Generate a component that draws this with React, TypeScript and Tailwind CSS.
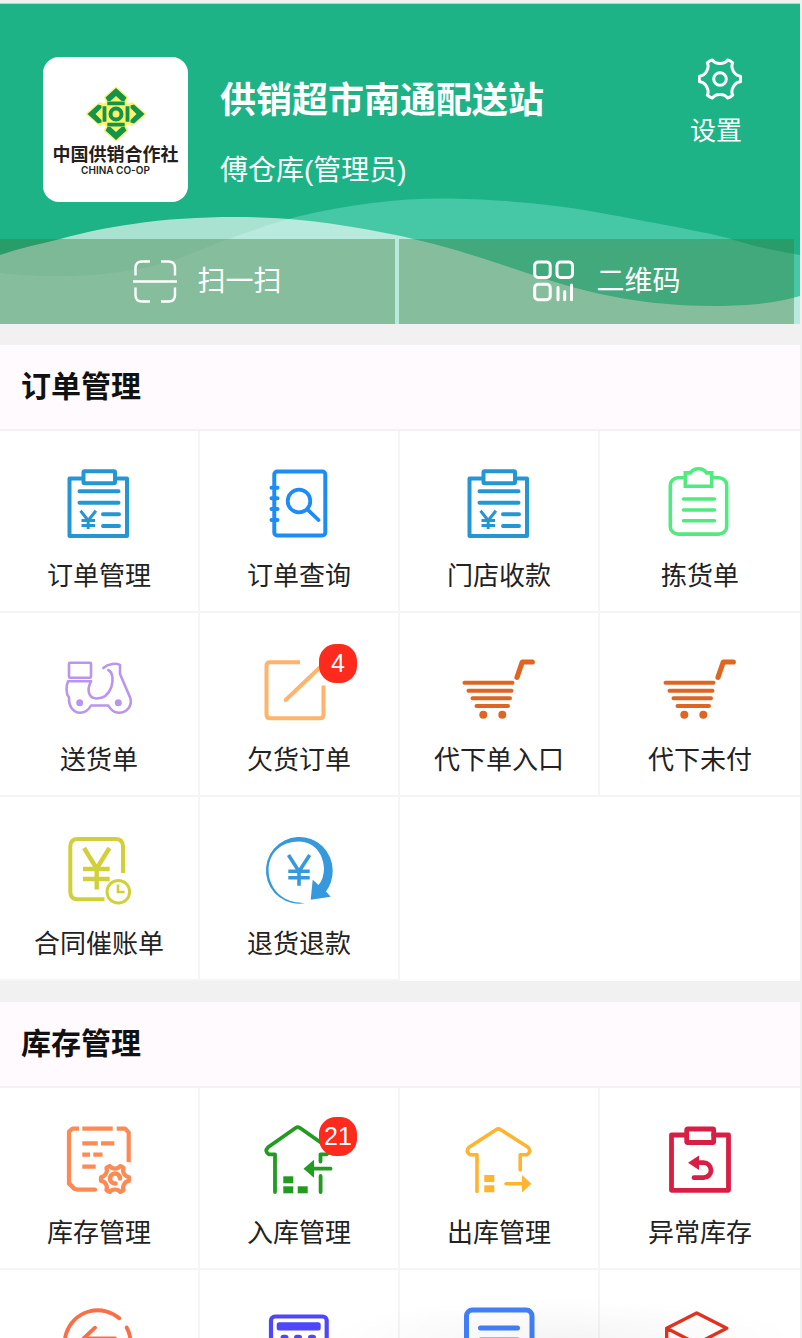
import type { ReactNode } from 'react';

interface IMenuItem {
  icon: ReactNode;
  label?: string;
  badge?: number;
}

interface IMenuSection {
  title: string;
  items: IMenuItem[];
}

// Six-lobed gear outline around (cx, cy)
const gearPath = (cx: number, cy: number, r: number) => {
  const point = (radius: number, deg: number) => {
    const a = (deg * Math.PI) / 180;
    return `${(cx + radius * Math.cos(a)).toFixed(2)} ${(cy + radius * Math.sin(a)).toFixed(2)}`;
  };
  let d = `M${point(r, -8)}`;
  for (let deg = 0; deg < 360; deg += 60) {
    d += `Q${point(r * 1.02, deg)} ${point(r, deg + 8)}`;
    d += `C${point(r * 0.72, deg + 13)} ${point(r * 0.72, deg + 47)} ${point(r, deg + 52)}`;
  }
  return d + 'Z';
};

function Icon({ color, width = 4, children }: { color: string; width?: number; children: ReactNode }) {
  return (
    <svg
      viewBox="0 0 80 80"
      className="block h-20 w-20"
      fill="none"
      stroke={color}
      strokeWidth={width}
      strokeLinecap="round"
      strokeLinejoin="round"
      aria-hidden="true"
    >
      {children}
    </svg>
  );
}

const OrderIcon = () => (
  <Icon color="#2497d3">
    <path d="M24 14.5H10.5V72h57.5V14.5H56" />
    <rect x="24.5" y="7.3" width="31.5" height="12" rx="1" />
    <path d="M20.500 27.300h39M20.500 38.700h39M44 50.300h16M44 62h16" />
    <path strokeWidth="3" strokeLinecap="butt" d="M21.500 46.700l7.700 9.800 7.700-9.800M29.200 56V65M22.500 56.500h13.500M22.500 61.500h13.500" />
  </Icon>
);

const SearchIcon = () => (
  <Icon color="#1e8cf5">
    <rect x="15.3" y="7.5" width="51" height="64" rx="3" />
    <path d="M12.5 23.7h6M12.5 34.3h6M12.5 45h6M12.5 56h6" />
    <circle cx="40" cy="37" r="11.3" strokeWidth="3.8" />
    <path strokeWidth="3.8" d="M48.3 45.3L59.5 56" />
  </Icon>
);

const PickIcon = () => (
  <Icon color="#52ea80" width={3.6}>
    <path d="M25.3 13.7H18a7.7 7.7 0 0 0-7.7 7.700v41a7.7 7.7 0 0 0 7.700 7.700h41a7.7 7.7 0 0 0 7.700-7.700v-41a7.7 7.7 0 0 0-7.700-7.700h-7.300" />
    <path strokeLinejoin="miter" d="M25.3 8.9h5.2c3.5-5.6 12.5-5.6 16 0h5.200v13.400H25.300z" />
    <path d="M23.5 35h31M23.5 46h31M23.5 56.7h31" />
  </Icon>
);

const ScooterIcon = () => (
  <Icon color="#b995ec" width={2.6}>
    <rect x="10" y="14.7" width="22" height="15" rx="1" />
    <path d="M32 33.3H9c-2 5-2.300 12 1 16.200-.5 9 4.500 15.200 11 15.200 5 0 8.500-2.500 11-7.200h17.300c2.500 4.700 5.500 7.200 10.700 7.200 8 0 13.500-7 11.300-14.700L61 26v-9c-3-2.500-12-1-16.700 3" />
    <path d="M49.300 22c5 2.500 5 11 3 17.200-3 8-9 11.300-14.600 11.300-8.200 0-10.200-8.500-5.700-17.200" />
    <circle cx="20.700" cy="54.700" r="2.200" fill="#b995ec" />
    <circle cx="59.300" cy="54.700" r="2.200" fill="#b995ec" />
  </Icon>
);

const OweIcon = () => (
  <Icon color="#ffb36b">
    <path strokeLinecap="butt" d="M41 14.300H11q-3.500 0-3.500 3.500v49q0 3.500 3.500 3.500h50q3.500 0 3.500-3.500V37.500" />
    <path d="M26.700 52L65 15.500" />
  </Icon>
);

const CartIcon = () => (
  <Icon color="#de6522">
    <path d="M5.500 34.700h48M9.500 42.700h43M13.500 50.300h37.500M17.500 58h31.500" />
    <path strokeWidth="5.200" d="M58 29.300l5.300-15.300h10" />
    <circle cx="24.300" cy="66.700" r="2" />
    <circle cx="43.300" cy="66.700" r="2" />
  </Icon>
);

const BillIcon = () => (
  <Icon color="#d2d03a">
    <path strokeLinecap="butt" d="M64 41V14.500q0-7.500-7.500-7.500h-37.700q-7.500 0-7.500 7.500v45.300q0 7.500 7.500 7.500H45.500" />
    <path strokeLinecap="butt" strokeLinejoin="miter" strokeWidth="4.400" d="M25 16l12.700 20.500L50.400 16M37.700 35v22.500M24 37h26.700M24 47h26.700" />
    <circle cx="59.300" cy="59.700" r="11.300" strokeWidth="3" />
    <path strokeLinecap="butt" strokeLinejoin="miter" strokeWidth="2.600" d="M59 52.500v7.500h6.500" />
  </Icon>
);

const RefundIcon = () => (
  <Icon color="#3799dd" width={3.600}>
    <path
      stroke="none"
      fill="#3799dd"
      d="M46 71.300A33.400 33.400 0 1 1 73.700 38.700Q73.700 50 67 59.500L71.700 64.700 51.700 67.700 53.700 47.700 59.500 53Q65 46.500 65 36C64 20 54 9.800 40 9.500 22 9.500 9.600 21 9.600 38.300 9.600 56 23 69.500 40 70.600Z"
    />
    <path strokeLinecap="butt" strokeLinejoin="miter" d="M29.500 23L40 39.500 50.700 23M40 39v14.700M29.300 39.300h21.400M29.300 45.700h21.400" />
  </Icon>
);

const StockIcon = () => (
  <Icon color="#fb8a54" width={4.200}>
    <path strokeLinecap="butt" d="M20 7.700h-6.500l-3.500 3v52l5 4.500" />
    <path d="M10 62l5 5.700 4 1H36" />
    <path strokeLinecap="butt" d="M23.300 7.700h30.400M57.700 7.700h8.500l3.500 4V41.300" />
    <path strokeLinecap="butt" d="M23.300 22.300h15.400M42 22.300h13.300M23.300 33.700H31M34.300 33.700h9.200M23.300 45.700h13.400" />
    <path d={gearPath(56, 58, 14)} />
    <path strokeWidth="4.500" d="M56.500 62.500a5 5 0 1 1 4.500-5" />
  </Icon>
);

const InboundIcon = () => (
  <Icon color="#219c21" width={3.800}>
    <path d="M16 71V33.300H10q-5-3 -1-7L36.500 7q2.300-1.500 4.600 0l27.400 19.300q4 4-1 7h-6V40.500M61.600 55v16" />
    <path d="M54 47.700h17.500" />
    <g fill="#219c21" stroke="none">
      <path d="M44.500 47.700L55 38.700v18z" />
      <rect x="24.300" y="55.300" width="10" height="7" />
      <rect x="24.300" y="65.300" width="10" height="7" />
      <rect x="38.700" y="65.300" width="10" height="7" />
    </g>
  </Icon>
);

const OutboundIcon = () => (
  <Icon color="#ffb42d" width={3.600}>
    <path d="M18 70.500V33.700H11q-5-3-1-7.500L37 8.700q2.300-1.500 4.600 0L69 26.200q4 4.500-1 7.500h-6.800V49" />
    <path d="M47 62.700h17" />
    <g fill="#ffb42d" stroke="none">
      <path d="M72.300 62.700L63 54v17.500z" />
      <rect x="25.300" y="54" width="10" height="7" />
      <rect x="25.300" y="64.300" width="10" height="7" />
    </g>
  </Icon>
);

const AbnormalIcon = () => (
  <Icon color="#d91e46" width={4.800}>
    <path d="M26.700 14H11.500v55.300h57V14H53.700" />
    <rect x="26.700" y="8" width="27" height="13.500" rx="1" />
    <path d="M34 56.700h9.500a7.500 7.500 0 0 0 0-15H38" />
    <path fill="#d91e46" stroke="none" d="M28 41.700l11-7.200v14.400z" />
  </Icon>
);

const TransferIcon = () => (
  <Icon color="#fb6d45" width={3.800}>
    <path d="M60.300 13.300A33 33 0 1 0 67.700 22.500" />
    <path d="M36 22.700L24.500 33.500H56" />
  </Icon>
);

const CalculatorIcon = () => (
  <Icon color="#4f46fb" width={4.200}>
    <rect x="12" y="11.500" width="55.700" height="62" rx="4" />
    <g fill="#4f46fb" stroke="none">
      <rect x="17.700" y="17.300" width="44" height="8.200" rx="2.500" />
      <rect x="21.500" y="29.700" width="8" height="8" rx="3" />
      <rect x="35" y="29.700" width="8" height="8" rx="3" />
      <rect x="49" y="29.700" width="8" height="8" rx="3" />
    </g>
  </Icon>
);

const DocumentIcon = () => (
  <Icon color="#427ffa" width={5}>
    <rect x="7.500" y="5" width="65.500" height="66" rx="6" />
    <path d="M21.500 23h37M21.500 35h37" />
  </Icon>
);

const BoxIcon = () => (
  <Icon color="#e2331f" width={3.400}>
    <path d="M36.700 8l30 15.200-30 15.600-30-15.600zM6.700 23.200v34l30 15.600 30-15.600M36.700 38.800v34" />
  </Icon>
);

const sections: IMenuSection[] = [
  {
    title: '订单管理',
    items: [
      { label: '订单管理', icon: <OrderIcon /> },
      { label: '订单查询', icon: <SearchIcon /> },
      { label: '门店收款', icon: <OrderIcon /> },
      { label: '拣货单', icon: <PickIcon /> },
      { label: '送货单', icon: <ScooterIcon /> },
      { label: '欠货订单', icon: <OweIcon />, badge: 4 },
      { label: '代下单入口', icon: <CartIcon /> },
      { label: '代下未付', icon: <CartIcon /> },
      { label: '合同催账单', icon: <BillIcon /> },
      { label: '退货退款', icon: <RefundIcon /> },
    ],
  },
  {
    title: '库存管理',
    items: [
      { label: '库存管理', icon: <StockIcon /> },
      { label: '入库管理', icon: <InboundIcon />, badge: 21 },
      { label: '出库管理', icon: <OutboundIcon /> },
      { label: '异常库存', icon: <AbnormalIcon /> },
      { icon: <TransferIcon /> },
      { icon: <CalculatorIcon /> },
      { icon: <DocumentIcon /> },
      { icon: <BoxIcon /> },
    ],
  },
];

function Logo() {
  return (
    <div className="flex h-[145px] w-[145px] shrink-0 flex-col items-center rounded-2xl bg-white pt-7 text-[#231f20]">
      <svg viewBox="-30 -29 60 58" className="h-[58px] w-[60px] shrink-0" fill="none" aria-hidden="true">
        <g fill="#fbf46a" stroke="#fbf46a" strokeWidth="2" strokeLinejoin="round">
          <path d="M0-26.500L11-16.500 9-12 12-9 16-11 29 0 16 11 12 9 9 12 11 16.500 0 26.500-11 16.500-9 12-12 9-16 11-29 0-16-11-12-9-9-12-11-16.500Z" />
        </g>
        <path
          fill="#14934a"
          d="M0-26L10.500-16.500 8.500-13H5.500L0-18-5.500-13H-8.500L-10.500-16.500ZM0 26L10.500 16.500 8.500 13H5.500L0 18-5.500 13H-8.500L-10.500 16.500ZM-28.500 0L-18-9.500-14.500-8.500V-6L-20.500 0-14.500 6V8.500L-18 9.500ZM28.500 0L18-9.500 14.500-8.500V-6L20.500 0 14.500 6V8.500L18 9.500Z"
        />
        <path stroke="#14934a" strokeWidth="3.800" d="M-8.700-10.700H8.700M-8.700 10.700H8.700M-11.500-7.700V7.700M11.500-7.700V7.700" />
        <circle r="5.500" stroke="#14934a" strokeWidth="4" />
      </svg>
      <span className="text-lg leading-6 font-bold whitespace-nowrap">中国供销合作社</span>
      <span className="font-['Inter',sans-serif] text-[10px] leading-[6px] font-semibold whitespace-nowrap">CHINA CO-OP</span>
    </div>
  );
}

function Header() {
  return (
    <header className="relative bg-[#1db386] pt-[53px] text-white">
      {/* Waves */}
      <svg viewBox="0 0 800 320" preserveAspectRatio="none" className="absolute inset-0 h-full w-full" aria-hidden="true">
        <path
          fill="#46c7a6"
          d="M0 269C60 276 130 272 180 254C215 240 260 222 300 212C350 200 400 194 450 194.500C520 196 570 203 601 209C650 218 700 227 728 234C752 242 775 247 800 251V320H0Z"
        />
        <path
          fill="#fff"
          fillOpacity="0.62"
          d="M0 251C20 244 40 240 60 235C85 228 110 223 133 220C165 215 200 213 235 213C260 213 280 214 300 216C340 220 370 226 401 232C440 241 470 250 500 260C560 280 620 302 715 302C750 302 775 299 800 292V320H0Z"
        />
      </svg>

      <div className="relative flex items-start pr-[58px] pl-[43px]">
        <Logo />
        <div className="ml-8 flex-1 pt-5">
          <h1 className="text-4xl leading-[48px] font-bold">供销超市南通配送站</h1>
          <p className="mt-6 text-[28px] leading-[44px]">傅仓库(管理员)</p>
        </div>
        <button className="flex flex-col items-end">
          <svg viewBox="0 0 44 44" className="h-11 w-11" fill="none" stroke="#fff" strokeWidth="3" strokeLinejoin="round" aria-hidden="true">
            <path d={gearPath(22, 22, 20.600)} />
            <circle cx="22" cy="22" r="6.300" />
          </svg>
          <span className="mt-3 text-[26px] leading-9">设置</span>
        </button>
      </div>

      <div className="relative mt-[37px] flex gap-1 pr-1.5 text-[28px]">
        <button className="flex h-[85px] flex-1 items-center justify-center gap-5 bg-[#3d7e3e]/40 pl-5">
          <svg viewBox="0 0 44 44" className="h-11 w-11" fill="none" stroke="#fff" strokeWidth="2.400" aria-hidden="true">
            <path d="M17 1.500H9q-6.500 0-6.500 6.500v7.500M28 1.500h7.500q6.500 0 6.500 6.500v7.500M17 41.500H9q-6.500 0-6.500-6.500v-7.500M28 41.500h7.500q6.500 0 6.500-6.500v-7.500M0 21.500h44" />
          </svg>
          扫一扫
        </button>
        <button className="flex h-[85px] flex-1 items-center justify-center gap-5 bg-[#3d7e3e]/40 pl-5">
          <svg viewBox="0 0 44 44" className="h-11 w-11" fill="none" stroke="#fff" strokeWidth="3" strokeLinecap="round" aria-hidden="true">
            <rect x="2.700" y="2" width="15.500" height="15.500" rx="3.500" />
            <rect x="25" y="2" width="15.500" height="15.500" rx="3.500" />
            <rect x="2.700" y="24.300" width="15.500" height="15.500" rx="3.500" />
            <path d="M26 27.500V39.700M32.700 31.500V39.700M39.500 25V39.700" />
          </svg>
          二维码
        </button>
      </div>
    </header>
  );
}

function MenuCell({ icon, label, badge }: IMenuItem) {
  return (
    <button className="flex h-[184px] flex-col items-center border-r-2 border-b-2 border-[#f5f5f5] bg-white pt-[35px] nth-[4n]:border-r-0">
      <span className="relative">
        {icon}
        {badge !== undefined && (
          <span className="absolute -top-1 left-[60px] flex h-[39px] min-w-[38px] items-center justify-center rounded-[17px] bg-[#fe2a1e] text-[25px] leading-none text-white">
            {badge}
          </span>
        )}
      </span>
      {label && <span className="mt-3.5 text-[26px] leading-9">{label}</span>}
    </button>
  );
}

function MenuSection({ title, items }: IMenuSection) {
  return (
    <section className="mt-[21px]">
      <h2 className="relative flex h-[84px] items-center bg-[#fffafe] pl-[21px] text-3xl font-bold text-[#111] shadow-[0_2px_0_#f4f0f3]">
        {title}
      </h2>
      <div className="grid grid-cols-4 bg-white">
        {items.map((item, index) => (
          <MenuCell key={index} {...item} />
        ))}
      </div>
    </section>
  );
}

function App() {
  return (
    <div className="relative h-screen overflow-hidden border-r-2 border-[#f1f1f1] bg-[#f1f1f1] pt-[3px] font-['Liberation_Sans','Noto_Sans_CJK_SC',sans-serif] text-[#222]">
      <div className="h-px bg-[#c4d0cb]" />
      <Header />
      <main>
        {sections.map((section) => (
          <MenuSection key={section.title} {...section} />
        ))}
      </main>
      {/* Soft shade along the bottom edge */}
      <div className="pointer-events-none absolute right-0 bottom-0 h-10 w-3/5 bg-[radial-gradient(ellipse_at_bottom,rgba(0,0,0,0.04),transparent_70%)]" />
    </div>
  );
}

export default App;
